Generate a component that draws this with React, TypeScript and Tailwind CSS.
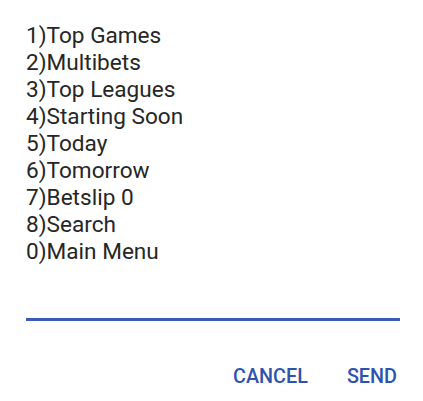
const items = [
  "1)Top Games",
  "2)Multibets",
  "3)Top Leagues",
  "4)Starting Soon",
  "5)Today",
  "6)Tomorrow",
  "7)Betslip 0",
  "8)Search",
  "0)Main Menu",
];

export default function App() {
  return (
    <div className="w-[423px] h-[401px] bg-white font-['Roboto',sans-serif] overflow-hidden">
      <div className="pl-[26px] pr-[23px] pt-[22px]">
        {/* USSD message body */}
        <div className="text-[22.6px] leading-[27px] text-[#262626]">
          {items.map((line) => (
            <div key={line}>{line}</div>
          ))}
        </div>

        {/* reply input underline */}
        <div className="mt-[53px] h-[3px] w-[374px] bg-[#3a5bb7]"></div>

        <div className="mt-[44px] flex justify-end gap-[39px] pr-[3px] text-[19.8px] leading-[24px] font-medium text-[#2f52b0]">
          <span>CANCEL</span>
          <span>SEND</span>
        </div>
      </div>
    </div>
  );
}
